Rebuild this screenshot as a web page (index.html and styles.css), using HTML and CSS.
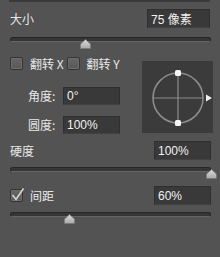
FILE: index.html
```html
<!DOCTYPE html>
<html>
<head>
<meta charset="utf-8">
<link rel="stylesheet" href="styles.css">
</head>
<body>
<div class="panel">
  <div class="topbar"></div>

  <div class="row row-size">
    <span class="label">大小</span>
    <div class="field field-size">75 像素</div>
  </div>
  <div class="slider">
    <div class="track"></div>
    <svg class="thumb" style="left:70px" width="11" height="10" viewBox="0 0 11 10"><defs><linearGradient id="tg1" x1="0" y1="0" x2="0" y2="1"><stop offset="0" stop-color="#dcdcdc"/><stop offset="1" stop-color="#a9a9a9"/></linearGradient></defs><path d="M5.5 0.5 L10.5 5 L10.5 9.5 L0.5 9.5 L0.5 5 Z" fill="url(#tg1)" stroke="#7a7a7a" stroke-width="0.8" stroke-linejoin="round"/></svg>
  </div>

  <div class="flip">
    <div class="flip-left">
      <div class="checks">
        <div class="check"><span class="box"></span><span class="ctext">翻转 X</span></div>
        <div class="check"><span class="box"></span><span class="ctext">翻转 Y</span></div>
      </div>
      <div class="prop prop-angle">
        <span class="plabel">角度:</span>
        <div class="field field-small">0°</div>
      </div>
      <div class="prop prop-round">
        <span class="plabel">圆度:</span>
        <div class="field field-small">100%</div>
      </div>
    </div>
    <div class="dial">
      <svg width="71" height="72" viewBox="0 0 71 72">
        <circle cx="36" cy="37" r="25" fill="none" stroke="#8c8c8c" stroke-width="1.6"/>
        <line x1="11" y1="37" x2="61" y2="37" stroke="#8c8c8c" stroke-width="1.2"/>
        <line x1="36" y1="12" x2="36" y2="62" stroke="#8c8c8c" stroke-width="1.2"/>
        <rect x="33" y="9" width="6" height="6" rx="1.5" fill="#f4f4f4"/>
        <rect x="33" y="59" width="6" height="6" rx="1.5" fill="#f4f4f4"/>
        <path d="M64 33.5 L70 37 L64 40.5 Z" fill="#f0f0f0"/>
      </svg>
    </div>
  </div>

  <div class="row row-hard">
    <span class="label">硬度</span>
    <div class="field field-small">100%</div>
  </div>
  <div class="slider">
    <div class="track"></div>
    <svg class="thumb" style="left:196px" width="11" height="10" viewBox="0 0 11 10"><defs><linearGradient id="tg2" x1="0" y1="0" x2="0" y2="1"><stop offset="0" stop-color="#dcdcdc"/><stop offset="1" stop-color="#a9a9a9"/></linearGradient></defs><path d="M5.5 0.5 L10.5 5 L10.5 9.5 L0.5 9.5 L0.5 5 Z" fill="url(#tg2)" stroke="#7a7a7a" stroke-width="0.8" stroke-linejoin="round"/></svg>
  </div>

  <div class="row row-space">
    <div class="check">
      <span class="box box-checked"><svg class="tick" width="15" height="15" viewBox="0 0 15 15"><path d="M2.5 7 L6 11.5 L13.5 0.5" fill="none" stroke="#d6d6d6" stroke-width="1.6"/></svg></span>
      <span class="ctext">间距</span>
    </div>
    <div class="field field-small">60%</div>
  </div>
  <div class="slider">
    <div class="track"></div>
    <svg class="thumb" style="left:54px" width="11" height="10" viewBox="0 0 11 10"><defs><linearGradient id="tg3" x1="0" y1="0" x2="0" y2="1"><stop offset="0" stop-color="#dcdcdc"/><stop offset="1" stop-color="#a9a9a9"/></linearGradient></defs><path d="M5.5 0.5 L10.5 5 L10.5 9.5 L0.5 9.5 L0.5 5 Z" fill="url(#tg3)" stroke="#7a7a7a" stroke-width="0.8" stroke-linejoin="round"/></svg>
  </div>
</div>
</body>
</html>
```

FILE: styles.css
```css
html, body {
  margin: 0;
  padding: 0;
  background: #535353;
}
.panel {
  width: 220px;
  height: 257px;
  background: #535353;
  color: #e8e8e8;
  font-family: "Liberation Sans", "Noto Sans CJK SC", sans-serif;
  font-size: 12px;
  overflow: hidden;
}
.topbar {
  height: 2px;
  margin: 0 10px 0 9px;
  background: #3a3a3a;
}
.row {
  display: flex;
  align-items: center;
  justify-content: space-between;
  padding: 0 9px 0 10px;
  height: 19px;
}
.row-size { margin-top: 7px; }
.row-hard { margin-top: 7px; }
.row-space { margin-top: 14px; }
.label, .ctext, .plabel {
  font-family: "Noto Sans CJK SC", "Liberation Sans", sans-serif;
  line-height: 1;
}
.field {
  box-sizing: border-box;
  height: 19px;
  background: #393939;
  border: 1px solid #2f2f2f;
  border-bottom-color: #414141;
  padding-left: 3px;
  display: flex;
  align-items: center;
  color: #f2f2f2;
  font-family: "Liberation Sans", "Noto Sans CJK SC", sans-serif;
  font-size: 12px;
}
.field-size {
  width: 63px;
  margin-right: 1px;
}
.field-small {
  width: 57px;
}
.slider {
  position: relative;
  margin: 7px 9px 0 10px;
  height: 5px;
}
.slider:first-of-type { }
.row-size + .slider { margin-top: 9px; }
.track {
  box-sizing: border-box;
  height: 5px;
  border-radius: 3px;
  background: #363636;
  border: 1px solid #262626;
  border-bottom-color: #656565;
}
.thumb {
  position: absolute;
  top: 2px;
  display: block;
}
.flip {
  display: flex;
  align-items: flex-start;
}
.flip-left {
  flex: 1;
  padding: 15px 0 0 10px;
}
.checks {
  display: flex;
  align-items: center;
  gap: 3px;
  height: 13px;
}
.check {
  display: flex;
  align-items: center;
  gap: 7px;
}
.box {
  position: relative;
  box-sizing: border-box;
  width: 13px;
  height: 13px;
  border: 1px solid #343434;
  border-radius: 2px;
  background: linear-gradient(#666666, #585858);
  box-shadow: inset 0 0 0 1px #6e6e6e;
}
.tick {
  position: absolute;
  left: -1px;
  top: -2px;
}
.prop {
  display: flex;
  align-items: center;
  height: 18px;
  padding-left: 18px;
}
.prop .field { height: 18px; }
.prop-angle { margin-top: 17px; }
.prop-round { margin-top: 11px; }
.plabel {
  width: 35px;
}
.dial {
  width: 71px;
  height: 72px;
  margin: 19px 7px 0 0;
  background: #3b3b3b;
  box-sizing: border-box;
}
.dial svg { display: block; }
```
